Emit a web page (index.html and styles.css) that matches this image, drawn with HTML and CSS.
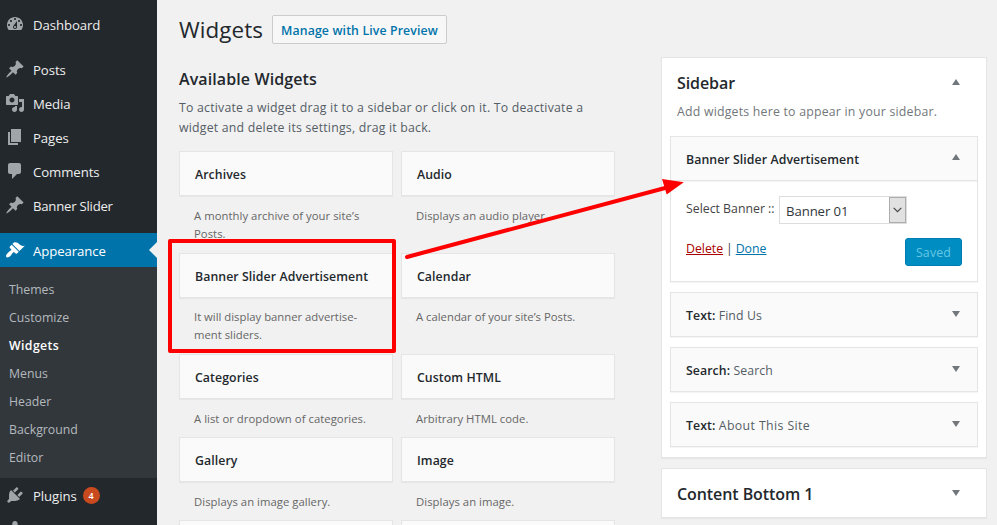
FILE: index.html
```html
<!DOCTYPE html>
<html lang="en">
<head>
<meta charset="utf-8">
<title>Widgets</title>
<link rel="stylesheet" href="styles.css">
</head>
<body>
<svg class="defs" width="0" height="0" aria-hidden="true">
  <symbol id="i-dash" viewBox="0 0 20 20"><path fill-rule="evenodd" d="M3.76 16h12.48c1.1-1.37 1.76-3.11 1.76-5 0-4.42-3.58-8-8-8s-8 3.58-8 8c0 1.89.66 3.63 1.76 5zM10 4c.55 0 1 .45 1 1s-.45 1-1 1-1-.45-1-1 .45-1 1-1zM6 6c.55 0 1 .45 1 1s-.45 1-1 1-1-.45-1-1 .45-1 1-1zm8 0c.55 0 1 .45 1 1s-.45 1-1 1-1-.45-1-1 .45-1 1-1zm-5.37 5.55L12 7v6c0 1.1-.9 2-2 2s-2-.9-2-2c0-.57.24-1.08.63-1.45zM4 10c.55 0 1 .45 1 1s-.45 1-1 1-1-.45-1-1 .45-1 1-1zm12 0c.55 0 1 .45 1 1s-.45 1-1 1-1-.45-1-1 .45-1 1-1zm-5 3c0-.55-.45-1-1-1s-1 .45-1 1 .45 1 1 1 1-.45 1-1z"/></symbol>
  <symbol id="i-pin" viewBox="0 0 20 20"><path d="M10.44 3.02l1.82-1.82 6.36 6.35-1.83 1.82c-1.05-.68-2.48-.57-3.41.36l-.75.75c-.92.93-1.04 2.35-.35 3.41l-1.83 1.82-2.41-2.41-2.8 2.79c-.42.42-3.38 2.71-3.8 2.29s1.86-3.39 2.28-3.81l2.79-2.79L4.1 9.36l1.83-1.82c1.05.69 2.48.57 3.4-.36l.75-.75c.93-.92 1.05-2.35.36-3.41z"/></symbol>
  <symbol id="i-media" viewBox="0 0 20 20"><path fill-rule="evenodd" d="M13 11V4c0-.55-.45-1-1-1h-1.67L9 1H5L3.67 3H2c-.55 0-1 .45-1 1v7c0 .55.45 1 1 1h10c.55 0 1-.45 1-1zM7 4.5c1.38 0 2.5 1.12 2.5 2.5S8.38 9.5 7 9.5 4.5 8.38 4.5 7 5.62 4.5 7 4.5zM14 6h5v10.5c0 1.38-1.12 2.5-2.5 2.5S14 17.88 14 16.5s1.12-2.5 2.5-2.5c.17 0 .34.02.5.05V9h-3V6zm-4 8.05V13h2v3.5c0 1.38-1.12 2.5-2.5 2.5S7 17.88 7 16.5 8.12 14 9.5 14c.17 0 .34.02.5.05z"/></symbol>
  <symbol id="i-page" viewBox="0 0 20 20"><path d="M6 15V2h10v13H6zm-1 1h8v2H3V5h2v11z"/></symbol>
  <symbol id="i-comment" viewBox="0 0 20 20"><path d="M5 2h9c1.1 0 2 .9 2 2v7c0 1.1-.9 2-2 2h-2l-5 5v-5H5c-1.1 0-2-.9-2-2V4c0-1.1.9-2 2-2z"/></symbol>
  <symbol id="i-brush" viewBox="0 0 20 20"><path d="M14.48 11.06L7.41 3.99l1.5-1.5c.5-.56 2.3-.47 3.51.32 1.21.8 1.43 1.28 2.91 2.1 1.18.64 2.45 1.26 4.45.85zm-.71.71L6.7 4.7 4.93 6.47c-.39.39-.39 1.02 0 1.41l1.06 1.06c.39.39.39 1.03 0 1.42-.6.6-1.43 1.11-2.21 1.69-.35.26-.7.53-1.01.84C1.43 14.23.4 16.08 1.4 17.07c.99 1 2.84-.03 4.18-1.36.31-.31.58-.66.85-1.02.57-.78 1.08-1.61 1.69-2.21.39-.39 1.02-.39 1.41 0l1.06 1.06c.39.39 1.02.39 1.41 0z"/></symbol>
  <symbol id="i-plug" viewBox="0 0 20 20"><path d="M13.11 4.36L9.87 7.6 8 5.73l3.24-3.24c.35-.34 1.05-.2 1.56.32.52.51.66 1.21.31 1.55zm-8 1.77l.91-1.12 9.01 9.01-1.19.84c-.71.71-2.63 1.16-3.82 1.16H6.14L4.9 17.26c-.59.59-1.54.59-2.12 0-.59-.58-.59-1.53 0-2.12l1.24-1.24v-3.88c0-1.13.4-3.19 1.09-3.89zm7.26 3.97l3.24-3.24c.34-.35 1.04-.21 1.55.31.52.51.66 1.21.31 1.55l-3.24 3.25z"/></symbol>
  <symbol id="i-user" viewBox="0 0 20 20"><path d="M10 9.25c-2.27 0-2.73-3.44-2.73-3.44C7 4.02 7.82 2 9.97 2c2.16 0 2.98 2.02 2.71 3.81 0 0-.41 3.44-2.68 3.44z"/></symbol>
</svg>
<div class="layout">
  <nav class="menu">
    <a class="item"><svg class="icon"><use href="#i-dash"/></svg><span>Dashboard</span></a>
    <div class="sep"></div>
    <a class="item"><svg class="icon"><use href="#i-pin"/></svg><span>Posts</span></a>
    <a class="item"><svg class="icon"><use href="#i-media"/></svg><span>Media</span></a>
    <a class="item"><svg class="icon"><use href="#i-page"/></svg><span>Pages</span></a>
    <a class="item"><svg class="icon"><use href="#i-comment"/></svg><span>Comments</span></a>
    <a class="item"><svg class="icon"><use href="#i-pin"/></svg><span class="tight">Banner Slider</span></a>
    <div class="sep"></div>
    <a class="item current"><svg class="icon"><use href="#i-brush"/></svg><span>Appearance</span></a>
    <div class="submenu">
      <a>Themes</a><a>Customize</a><a class="on">Widgets</a><a>Menus</a><a>Header</a><a>Background</a><a>Editor</a>
    </div>
    <a class="item"><svg class="icon"><use href="#i-plug"/></svg><span>Plugins</span><b class="count">4</b></a>
    <a class="item last"><svg class="icon"><use href="#i-user"/></svg></a>
  </nav>
  <main class="main">
    <header class="head">
      <h1>Widgets</h1>
      <a class="preview">Manage with Live Preview</a>
    </header>
    <div class="columns">
      <section class="available">
        <h2>Available Widgets</h2>
        <p class="intro">To activate a widget drag it to a sidebar or click on it. To deactivate a<br>widget and delete its settings, drag it back.</p>
        <div class="grid">
          <div><h3 class="card">Archives</h3><p>A monthly archive of your site’s<br>Posts.</p></div>
          <div><h3 class="card">Audio</h3><p>Displays an audio player.</p></div>
          <div class="raised marked"><h3 class="card">Banner Slider Advertisement</h3><p>It will display banner advertise-<br>ment sliders.</p></div>
          <div class="raised"><h3 class="card">Calendar</h3><p>A calendar of your site’s Posts.</p></div>
          <div><h3 class="card">Categories</h3><p>A list or dropdown of categories.</p></div>
          <div><h3 class="card">Custom HTML</h3><p>Arbitrary HTML code.</p></div>
          <div><h3 class="card">Gallery</h3><p>Displays an image gallery.</p></div>
          <div><h3 class="card">Image</h3><p>Displays an image.</p></div>
          <div class="cut"><h3 class="card"></h3></div>
          <div class="cut"><h3 class="card"></h3></div>
        </div>
      </section>
      <aside class="areas">
        <section class="area">
          <div class="area-head"><h2>Sidebar</h2><i class="up"></i></div>
          <p class="area-desc">Add widgets here to appear in your sidebar.</p>
          <div class="stack">
            <div class="widget open">
              <div class="bar"><h3>Banner Slider Advertisement</h3><i class="up"></i></div>
              <div class="form">
                <div class="field"><label>Select Banner ::</label><span class="select"><span>Banner 01</span><span class="drop"><svg width="9" height="6" viewBox="0 0 9 6"><path d="M.7.8l3.8 3.8L8.3.8" fill="none" stroke="#444" stroke-width="1.2"/></svg></span></span></div>
                <div class="actions"><span class="links"><a class="del">Delete</a> | <a class="done">Done</a></span><span class="saved">Saved</span></div>
              </div>
            </div>
            <div class="widget"><div class="bar"><h3>Text: <span>Find Us</span></h3><i class="down"></i></div></div>
            <div class="widget"><div class="bar"><h3>Search: <span>Search</span></h3><i class="down"></i></div></div>
            <div class="widget"><div class="bar"><h3>Text: <span class="wide">About This Site</span></h3><i class="down"></i></div></div>
          </div>
        </section>
        <section class="area closed">
          <div class="area-head"><h2>Content Bottom 1</h2><i class="down"></i></div>
        </section>
      </aside>
    </div>
  </main>
</div>
<svg class="arrow" width="290" height="90" viewBox="0 0 290 90"><path d="M7 78L266 8.700" stroke="#f00" stroke-width="4" stroke-linecap="round"/><path d="M262 0l21.800 3.200L266.700 15.500z" fill="#f00"/></svg>
</body>
</html>
```
FILE: styles.css
```css
*, *::before, *::after { box-sizing: border-box; }
body {
  margin: 0;
  height: 525px;
  overflow: hidden;
  position: relative;
  background: #f1f1f1;
  color: #444;
  font: 12.3px/18px "Open Sans", "Noto Sans", sans-serif;
}
h1, h2, h3, p { margin: 0; }
.defs { position: absolute; }
.layout { display: flex; height: 525px; }

.menu { width: 157px; flex: none; background: #23282d; padding-top: 7px; overflow: hidden; }
.item {
  display: flex;
  align-items: center;
  height: 34px;
  padding: 2px 0 0 5px;
  color: #eee;
  font-size: 13.2px;
  letter-spacing: -.08px;
  position: relative;
}
.tight { letter-spacing: -.25px; }
.last { height: 13px; align-items: flex-start; padding-top: 7px; overflow: hidden; }
.icon { width: 20px; height: 20px; flex: none; margin: -2px 8px 0 0; fill: #a0a5aa; }
.last .icon { margin-top: 0; }
.sep { height: 11px; }
.current { background: #0073aa; color: #fff; }
.current .icon { fill: #fff; }
.current::after {
  content: "";
  position: absolute;
  right: 0;
  top: 9px;
  border: 8px solid transparent;
  border-left-width: 0;
  border-right-color: #f1f1f1;
}
.submenu { background: #32373c; height: 211px; padding: 8px 0 0 9px; }
.submenu a { display: block; height: 28px; line-height: 30px; color: #b4b9be; font-size: 12.3px; }
.submenu .on { color: #fff; font-weight: 600; letter-spacing: .4px; }
.count {
  width: 17px;
  height: 17px;
  margin: -2px 0 0 6px;
  border-radius: 50%;
  background: #ca4a1f;
  color: #fff;
  font-size: 9px;
  font-weight: 600;
  line-height: 17px;
  text-align: center;
}

.main { flex: 1; height: 525px; overflow: hidden; padding: 15px 10px 0 22px; }
.head { display: flex; height: 42px; }
.head h1 { width: 93px; font-size: 22.4px; font-weight: 400; line-height: 29px; letter-spacing: .1px; color: #23282d; white-space: nowrap; }
.preview {
  width: 175px;
  height: 29px;
  border: 1px solid #ccc;
  border-radius: 2px;
  background: #f7f7f7;
  color: #0073aa;
  font-weight: 600;
  letter-spacing: .13px;
  line-height: 29px;
  text-align: center;
  white-space: nowrap;
}
.columns { display: flex; justify-content: space-between; align-items: flex-start; }
.available { width: 436px; }
.available h2 { padding-top: 11px; font-size: 16px; line-height: 22px; font-weight: 600; letter-spacing: .1px; color: #23282d; }
.intro { margin-top: 8px; height: 53px; line-height: 20px; letter-spacing: .21px; color: #555d66; white-space: nowrap; }
.grid {
  display: grid;
  grid-template-columns: 214px 214px;
  grid-template-rows: 102px 101px 83px 83px;
  column-gap: 8px;
}
.card, .bar {
  height: 45px;
  border: 1px solid #e5e5e5;
  background: #fafafa;
  box-shadow: 0 1px 1px rgba(0, 0, 0, .04);
}
.card, .bar h3 { font-size: 12.3px; font-weight: 600; line-height: 45px; letter-spacing: .08px; color: #23282d; white-space: nowrap; }
.card { padding-left: 15px; }
.cut { height: 5px; overflow: hidden; }
.grid p { padding: 11px 0 0 15px; font-size: 11.3px; letter-spacing: .04px; color: #666; white-space: nowrap; }
.grid .raised p { padding-top: 10px; letter-spacing: 0; }
.marked { position: relative; }
.marked::after {
  content: "";
  position: absolute;
  left: -11px;
  top: -14px;
  width: 228px;
  height: 114px;
  border: 4px solid #f00;
  border-radius: 2px;
}

.areas { width: 326px; }
.area { height: 401px; border: 1px solid #e5e5e5; background: #fff; box-shadow: 0 1px 1px rgba(0, 0, 0, .04); }
.area-head { display: flex; justify-content: space-between; height: 48px; padding: 13px 26px 0 15px; }
.area-head h2 { font-size: 16px; line-height: 24px; font-weight: 600; letter-spacing: -.08px; color: #23282d; }
.area-head i { margin-top: 8px; }
.area-desc { padding-left: 15px; height: 30px; margin-top: -4px; line-height: 20px; letter-spacing: .22px; color: #72777c; white-space: nowrap; }
.stack { display: flex; flex-direction: column; gap: 10px; padding: 4px 8px 0; }
.bar { display: flex; justify-content: space-between; padding: 0 17px 0 15px; }
.bar i { margin-top: 18px; }
.bar .up { margin-top: 17px; }
.bar h3 span { font-weight: 400; letter-spacing: .1px; color: #555d66; }
.bar h3 .wide { letter-spacing: .4px; }
.up, .down { width: 8px; height: 6px; background: #72777c; }
.up { clip-path: polygon(50% 0, 100% 100%, 0 100%); }
.down { clip-path: polygon(0 0, 100% 0, 50% 100%); }
.form { height: 101px; border: 1px solid #e5e5e5; border-top: 0; padding: 15px 15px 0; box-shadow: 0 1px 1px rgba(0, 0, 0, .04); }
.field { display: flex; height: 28px; white-space: nowrap; }
.field label { width: 93px; line-height: 26px; }
.select { display: flex; justify-content: space-between; width: 128px; height: 28px; border: 1px solid #ddd; padding-left: 6px; font-size: 13.2px; line-height: 29px; letter-spacing: -.1px; color: #32373c; }
.drop { width: 17px; height: 26px; display: grid; place-items: center; border: 1px solid #adadad; background: #e1e1e1; }
.actions { display: flex; justify-content: space-between; margin-top: 14px; }
.links { line-height: 22px; letter-spacing: -.2px; }
.links a { text-decoration: underline; letter-spacing: 0; }
.del { color: #a00; }
.done { color: #0073aa; }
.saved { width: 57px; height: 28px; border: 1px solid #007cb2; border-radius: 3px; background: #008ec2; color: #66c6e4; line-height: 28px; letter-spacing: .2px; text-align: center; }
.closed { height: 50px; margin-top: 10px; }

.arrow { position: absolute; left: 400px; top: 179px; }
```
